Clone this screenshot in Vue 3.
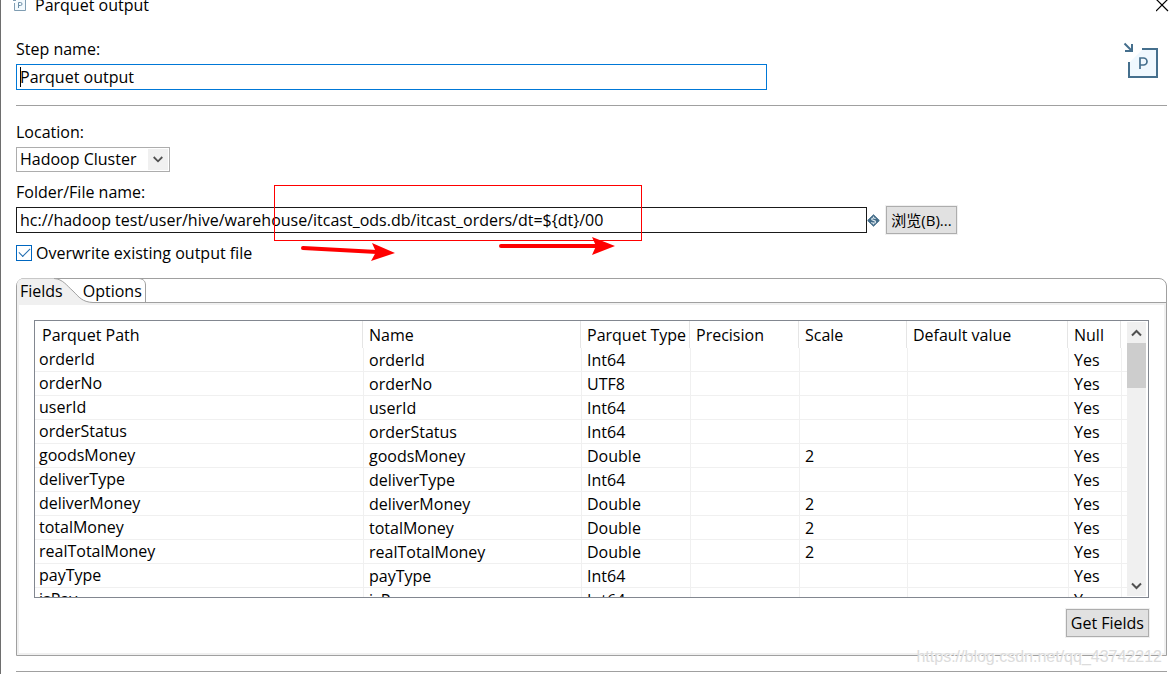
<script setup>
import { ref } from 'vue'

const stepName = ref('Parquet output')
const location = ref('Hadoop Cluster')
const folder = ref('hc://hadoop test/user/hive/warehouse/itcast_ods.db/itcast_orders/dt=${dt}/00')
const overwrite = ref(true)

const columns = ['Parquet Path', 'Name', 'Parquet Type', 'Precision', 'Scale', 'Default value', 'Null']

const fields = [
  { name: 'orderId', type: 'Int64', scale: '' },
  { name: 'orderNo', type: 'UTF8', scale: '' },
  { name: 'userId', type: 'Int64', scale: '' },
  { name: 'orderStatus', type: 'Int64', scale: '' },
  { name: 'goodsMoney', type: 'Double', scale: '2' },
  { name: 'deliverType', type: 'Int64', scale: '' },
  { name: 'deliverMoney', type: 'Double', scale: '2' },
  { name: 'totalMoney', type: 'Double', scale: '2' },
  { name: 'realTotalMoney', type: 'Double', scale: '2' },
  { name: 'payType', type: 'Int64', scale: '' },
  { name: 'isPay', type: 'Int64', scale: '' },
]
</script>

<template>
  <div class="window">
    <header class="titlebar">
      <svg class="title-icon" width="14" height="12" viewBox="0 0 14 12" aria-hidden="true">
        <path d="M1.500 3V10.500H12.500V0H5Z" fill="#f3fafe" />
        <path d="M1.500 3V10.500H12.500V0" fill="none" stroke="#7f9db2" />
        <path d="M0 .5H3" stroke="#7f9db2" />
        <path d="M5.500 8V2.500H7.500A1.500 1.500 0 0 1 7.500 5.500H5.500" fill="none" stroke="#6f90a8" />
      </svg>
      <span class="title">Parquet output</span>
      <button class="close" type="button" aria-label="Close">
        <svg width="13" height="12" viewBox="0 0 13 12" aria-hidden="true">
          <path d="M0 -1L12 11M12 -1L0 11" stroke="#000" stroke-width="1.200" />
        </svg>
      </button>
    </header>

    <section class="step">
      <div class="step-field">
        <label for="step">Step name:</label>
        <div class="step-box">
          <input id="step" v-model="stepName" class="text-input focused" type="text" />
          <span class="caret"></span>
        </div>
      </div>
      <svg class="step-icon" width="36" height="36" viewBox="0 0 36 36" aria-hidden="true">
        <path d="M20 7H34V34H7V20Z" fill="#f0f8fe" />
        <path d="M19 7H34V35H6V20" fill="none" stroke="#456f8d" stroke-width="2" />
        <path d="M1.500 1.500L8 8M9 2V9H2" fill="none" stroke="#456f8d" stroke-width="2" />
        <path d="M17 27V16H20.500A3.500 3.500 0 0 1 20.500 23H17" fill="none" stroke="#456f8d" stroke-width="1.700" />
      </svg>
    </section>

    <section class="file">
      <label for="location">Location:</label>
      <div class="select-box">
        <select id="location" v-model="location">
          <option>Hadoop Cluster</option>
        </select>
        <span class="select-arrow">
          <svg width="10" height="7" viewBox="0 0 10 7" aria-hidden="true">
            <path d="M.7 1L5 5.300L9.300 1" fill="none" stroke="#505050" stroke-width="1.800" />
          </svg>
        </span>
      </div>

      <label class="folder-label" for="folder">Folder/File name:</label>
      <div class="folder-row">
        <input id="folder" v-model="folder" class="text-input" type="text" />
        <svg class="variable" width="13" height="13" viewBox="0 0 13 13" aria-hidden="true">
          <path d="M6.500 .8L12.300 6.500L6.500 12.200L.7 6.500Z" fill="#426b88" stroke="#426b88" stroke-linejoin="round" />
          <path d="M8.500 4.800C7.800 3.600 4.700 3.800 4.700 5.200C4.700 6.700 8.600 6.100 8.600 7.900C8.600 9.400 5.200 9.500 4.400 8.200" fill="none" stroke="#dce8ef" stroke-width="1.200" />
          <path d="M6.500 2.500V4M6.500 9V10.500" stroke="#dce8ef" />
        </svg>
        <button class="push browse" type="button">浏览(B)...</button>
      </div>

      <label class="check">
        <input v-model="overwrite" type="checkbox" />
        <span>Overwrite existing output file</span>
      </label>

      <svg class="marks" width="370" height="80" viewBox="0 0 370 80" aria-hidden="true">
        <rect x=".5" y=".5" width="367" height="55" fill="none" stroke="#f00" />
        <path d="M29 63L103 67" stroke="#f00" stroke-width="4" stroke-linecap="round" />
        <path d="M98 58L121 68L97 76L102 67Z" fill="#f00" />
        <path d="M227 61H323" stroke="#f00" stroke-width="4" stroke-linecap="round" />
        <path d="M318 52L341 61L318 70L322 61Z" fill="#f00" />
      </svg>
    </section>

    <section class="tabs">
      <div class="tablist" role="tablist">
        <svg class="tab-shape" width="130" height="25" viewBox="0 0 130 25" aria-hidden="true">
          <path d="M0 25V7Q0 1 7 .5H37C46 1 50 8 56 13C62 19 65 24 76 24.500V25Z" fill="#f0f0f0" />
          <path d="M37 .5C46 1 50 8 56 13C62 19 65 24 76 24.500" fill="none" stroke="#a0a0a0" />
          <path d="M122 .5C127 1 128.500 4 128.500 7V25" fill="none" stroke="#a0a0a0" />
        </svg>
        <button class="tab first" type="button" role="tab" aria-selected="true">Fields</button>
        <button class="tab" type="button" role="tab" aria-selected="false">Options</button>
      </div>

      <div class="panel" role="tabpanel">
        <div class="grid">
          <div class="grid-view">
            <table>
              <colgroup>
                <col class="c-path" />
                <col class="c-name" />
                <col class="c-type" />
                <col class="c-type" />
                <col class="c-scale" />
                <col />
                <col class="c-null" />
                <col class="c-rest" />
              </colgroup>
              <thead>
                <tr>
                  <th v-for="c in columns" :key="c" scope="col">{{ c }}</th>
                  <td></td>
                </tr>
              </thead>
              <tbody>
                <tr v-for="f in fields" :key="f.name">
                  <td>{{ f.name }}</td>
                  <td>{{ f.name }}</td>
                  <td>{{ f.type }}</td>
                  <td></td>
                  <td>{{ f.scale }}</td>
                  <td></td>
                  <td>Yes</td>
                  <td></td>
                </tr>
              </tbody>
            </table>
          </div>
          <div class="scrollbar">
            <button type="button" aria-label="Scroll up">
              <svg width="11" height="8" viewBox="0 0 11 8" aria-hidden="true">
                <path d="M1 6.500L5.500 2L10 6.500" fill="none" stroke="#505050" stroke-width="2" />
              </svg>
            </button>
            <div class="track"><div class="thumb"></div></div>
            <button type="button" aria-label="Scroll down">
              <svg width="11" height="8" viewBox="0 0 11 8" aria-hidden="true">
                <path d="M1 1.500L5.500 6L10 1.500" fill="none" stroke="#505050" stroke-width="2" />
              </svg>
            </button>
          </div>
        </div>
        <button class="push get" type="button">Get Fields</button>
      </div>
    </section>

    <hr class="bottom-rule" />
    <span class="watermark">https://blog.csdn.net/qq_43742212</span>
  </div>
</template>

<style>
body {
  background: #fff;
}
</style>

<style scoped>
.window {
  position: relative;
  box-sizing: border-box;
  min-height: 100vh;
  padding: 0 4px 0 15px;
  border-left: 1px solid #6e6e6e;
  overflow: hidden;
  background: #fff;
  color: #000;
  font: 16px/20px "Open Sans", "Noto Sans CJK SC", sans-serif;
}

button,
input,
select {
  box-sizing: border-box;
  margin: 0;
  padding: 0;
  border: 0;
  border-radius: 0;
  outline: 0;
  background: none;
  color: inherit;
  font: inherit;
}

svg {
  display: block;
}

label {
  display: block;
}

.titlebar {
  display: flex;
  align-items: flex-start;
  height: 16px;
  margin: 0 -2px 0 -3px;
}

.title {
  flex: 1;
  margin: -5px 0 0 8px;
}

.step {
  display: flex;
  justify-content: space-between;
  padding: 23px 8px 15px 0;
  border-bottom: 1px solid #a0a0a0;
}

.step-field {
  width: 66%;
}

.step-box {
  position: relative;
  max-width: 751px;
  margin-top: 5px;
}

.text-input {
  display: block;
  width: 100%;
  height: 26px;
  padding: 0 3px;
  border: 1px solid #1a1a1a;
}

.text-input.focused {
  border-color: #0078d7;
}

.caret {
  position: absolute;
  top: 3px;
  left: 4px;
  width: 1px;
  height: 20px;
  background: #000;
}

.step-icon {
  margin-top: 3px;
}

.file {
  position: relative;
  padding-top: 16px;
}

.select-box {
  position: relative;
  width: 154px;
  margin-top: 5px;
}

select {
  display: block;
  width: 100%;
  height: 25px;
  padding: 0 24px 2px 3px;
  border: 1px solid #adadad;
  appearance: none;
}

.select-arrow {
  position: absolute;
  top: 2px;
  right: 2px;
  bottom: 2px;
  display: grid;
  place-items: center;
  width: 20px;
  background: #f0f0f0;
  pointer-events: none;
}

.folder-label {
  margin-top: 10px;
}

.folder-row {
  display: flex;
  align-items: center;
  height: 30px;
  margin-top: 3px;
}

.folder-row .text-input {
  flex: 0 1 851px;
}

.variable {
  flex: none;
}

.push {
  flex: none;
  height: 28px;
  padding: 0 4px;
  border: 1px solid #adadad;
  background: #e1e1e1;
  box-shadow: 0 0 0 1px #f0f0f0;
}

.browse {
  width: 71px;
  margin-left: 6px;
  font-size: 15px;
}

.get {
  min-width: 82px;
}

.check {
  display: flex;
  align-items: center;
  width: max-content;
  gap: 4px;
  margin-top: 8px;
}

.check input {
  display: grid;
  place-items: center;
  width: 16px;
  height: 16px;
  border: 1px solid #0067c0;
  appearance: none;
}

.check input:checked::before {
  content: "";
  width: 11px;
  height: 6px;
  margin-bottom: 4px;
  box-sizing: border-box;
  border: solid #1f6cb0;
  border-width: 0 0 1px 1px;
  transform: rotate(-45deg);
}

.marks {
  position: absolute;
  top: 79px;
  left: 258px;
  pointer-events: none;
}

.tabs {
  margin-top: 15px;
  border: 1px solid #a0a0a0;
  border-radius: 8px 8px 0 0;
}

.tablist {
  position: relative;
  display: flex;
  height: 23px;
  border-bottom: 1px solid #a0a0a0;
}

.tab-shape {
  position: absolute;
  top: -1px;
  left: 0;
}

.tab {
  position: relative;
  height: 24px;
  padding: 0 3px;
}

.tab.first {
  margin-right: 14px;
}

.panel {
  display: flex;
  flex-direction: column;
  align-items: flex-end;
  gap: 11px;
  padding: 15px 15px 16px;
  border: 2px solid #f0f0f0;
}

.grid {
  box-sizing: border-box;
  display: flex;
  width: 100%;
  height: 278px;
  border: 1px solid #828790;
}

.grid-view {
  flex: 1;
  min-width: 0;
  overflow: hidden;
}

table {
  width: 100%;
  border-spacing: 0;
  table-layout: fixed;
}

.c-path { width: 328px; }
.c-name { width: 218px; }
.c-type { width: 109px; }
.c-scale { width: 108px; }
.c-null { width: 53px; }
.c-rest { width: 6px; }

th,
td {
  box-sizing: border-box;
  padding: 0;
  font-weight: 400;
  text-align: left;
  white-space: nowrap;
}

th {
  height: 27px;
  padding: 0 0 0 6px;
  border-right: 1px solid #e5e5e5;
}

th:first-child {
  padding-left: 7px;
}

tbody td {
  height: 24px;
  padding-left: 5px;
  border-bottom: 1px solid #f0f0f0;
  border-left: 1px solid #f0f0f0;
}

tbody td:first-child {
  padding: 0 0 2px 4px;
  border-left: 0;
}

tbody td:last-child {
  padding: 0;
}

.scrollbar {
  display: flex;
  flex-direction: column;
  width: 19px;
  margin: 1px 2px 1px 0;
  background: #f0f0f0;
}

.scrollbar button {
  display: grid;
  place-items: center;
  height: 21px;
}

.track {
  flex: 1;
}

.thumb {
  height: 45px;
  background: #cdcdcd;
}

.bottom-rule {
  height: 1px;
  margin: 15px 0 2px;
  border: 0;
  background: #a0a0a0;
}

.watermark {
  position: absolute;
  right: 9px;
  bottom: 7px;
  color: #dcdcdc;
  font: 16px/20px "Liberation Sans", sans-serif;
  text-shadow: 1px 1px 0 #fff;
  pointer-events: none;
}
</style>
